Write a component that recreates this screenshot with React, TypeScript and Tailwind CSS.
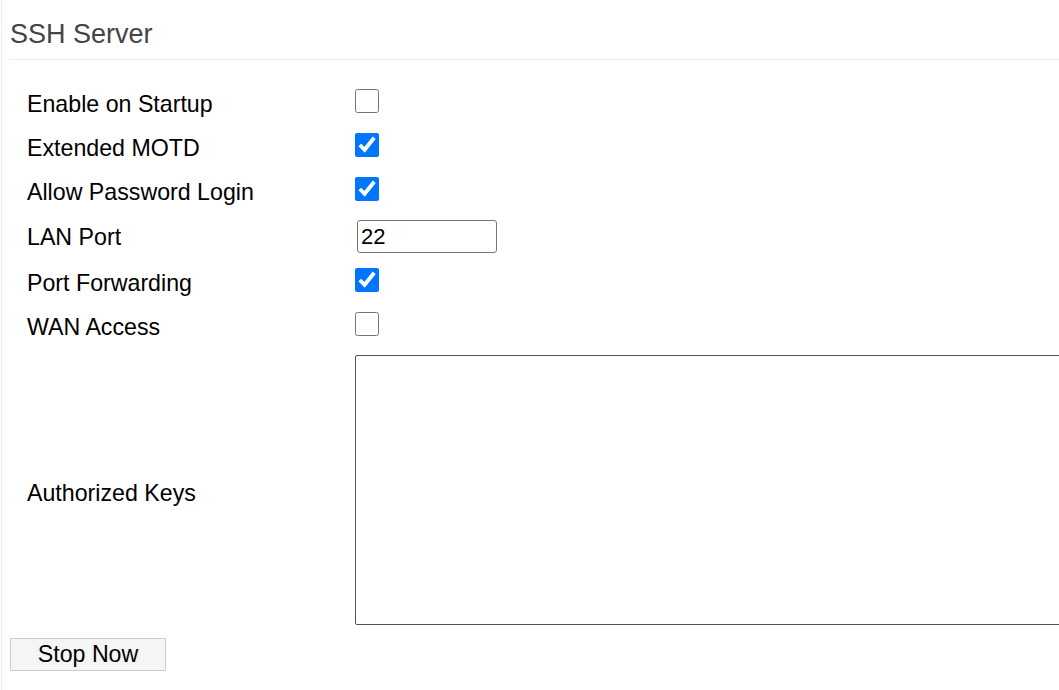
import React from "react";

type Row = {
  label: string;
  kind: "check" | "text";
  checked?: boolean;
  value?: string;
  h: string;
};

const rows: Row[] = [
  { label: "Enable on Startup", kind: "check", checked: false, h: "h-[44px]" },
  { label: "Extended MOTD", kind: "check", checked: true, h: "h-[44px]" },
  { label: "Allow Password Login", kind: "check", checked: true, h: "h-[44px]" },
  { label: "LAN Port", kind: "text", value: "22", h: "h-[47px]" },
  { label: "Port Forwarding", kind: "check", checked: true, h: "h-[44px]" },
  { label: "WAN Access", kind: "check", checked: false, h: "h-[44px]" },
];

const App: React.FC = () => {
  return (
    <div
      className="ml-px h-[690px] overflow-hidden border-l border-[#eee] bg-white pl-2 text-black"
      style={{ fontFamily: '"Liberation Sans", Arial, sans-serif' }}
    >
      <h2 className="pt-[19px] text-[27px] leading-[31px] text-[#444]">SSH Server</h2>
      <div className="mt-[9px] border-t border-[#eee]" />

      <div className="pt-[21px]">
        {rows.map((r) => (
          <div key={r.label} className={`grid grid-cols-[345px_1fr] items-center ${r.h}`}>
            <div className="pl-[17px] pt-[2px] text-[23.2px] leading-[27px]">{r.label}</div>
            <div className="flex items-center">
              {r.kind === "check" ? (
                <input
                  type="checkbox"
                  defaultChecked={r.checked}
                  className="m-0 mb-[4px] h-6 w-6 accent-[#0075ff]"
                />
              ) : (
                <input
                  type="text"
                  defaultValue={r.value}
                  className="ml-[2px] h-[33px] w-[140px] rounded-[3px] border border-[#767676] px-[3px] text-[22px] outline-none"
                />
              )}
            </div>
          </div>
        ))}

        <div className="grid grid-cols-[345px_1fr] items-center pt-[7px]">
          <div className="pl-[17px] pt-[6px] text-[23.2px] leading-[27px]">Authorized Keys</div>
          <textarea className="h-[270px] w-[760px] resize-none rounded-[2px] border border-[#555] outline-none" />
        </div>
      </div>

      <button className="mt-[13px] flex h-[33px] w-[156px] items-center justify-center border border-[#ccc] bg-[#f5f5f5] text-[23.2px]">
        Stop Now
      </button>
    </div>
  );
};

export default App;
